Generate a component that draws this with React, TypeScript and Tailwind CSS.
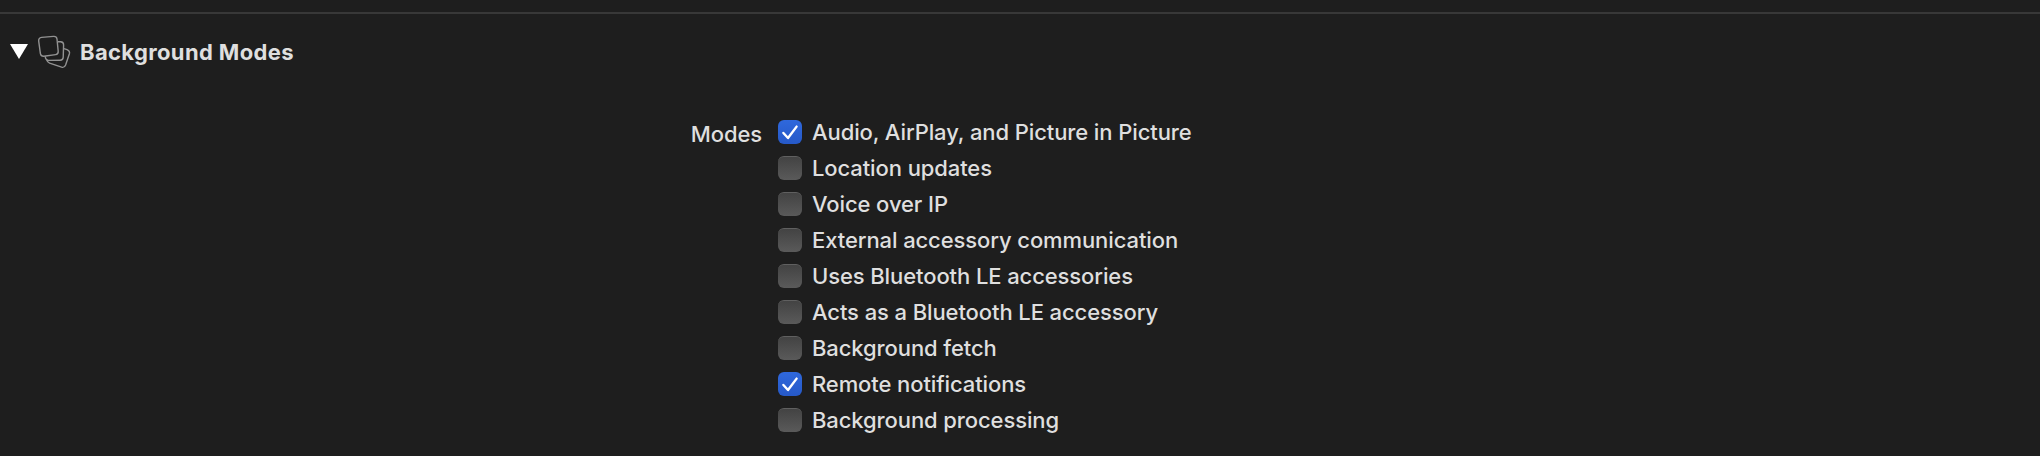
import { useState } from "react";

const MODES = [
  { label: "Audio, AirPlay, and Picture in Picture", enabled: true },
  { label: "Location updates", enabled: false },
  { label: "Voice over IP", enabled: false },
  { label: "External accessory communication", enabled: false },
  { label: "Uses Bluetooth LE accessories", enabled: false },
  { label: "Acts as a Bluetooth LE accessory", enabled: false },
  { label: "Background fetch", enabled: false },
  { label: "Remote notifications", enabled: true },
  { label: "Background processing", enabled: false },
];

function LayersIcon() {
  return (
    <svg
      className="h-9 w-9 shrink-0"
      viewBox="0 0 36 36"
      fill="none"
      stroke="#929292"
      strokeWidth="1.4"
      strokeLinejoin="round"
    >
      <path d="M5.6 3.4 17.6 2.4Q20.6 2.2 21 5L22.2 17.2Q22.4 20.2 19.6 20.6L7.8 22.2Q5 22.4 4.4 19.6L2.7 7.2Q2.4 3.8 5.6 3.4Z" />
      <path d="M22 7.8 24.6 7.8Q27.6 8 27.6 10.8L27.2 23.4Q27 26.2 24.2 26.2L12.4 26.4Q9.6 26.2 9.2 22.4" />
      <path d="M28 14.6 31 15.6Q34.2 17 33.4 19.8L29.6 31Q28.4 34 25.6 33.2L13.6 29.2Q11.4 28.2 10.8 26" />
    </svg>
  );
}

function Checkbox({ checked, onToggle }: { checked: boolean; onToggle: () => void }) {
  return (
    <button
      role="checkbox"
      aria-checked={checked}
      onClick={onToggle}
      className={`flex h-6 w-6 shrink-0 items-center justify-center rounded-[6px] ${
        checked
          ? "bg-linear-to-b from-[#2f68dc] to-[#2659c8]"
          : "border-t border-[#606060] bg-linear-to-b from-[#434343] to-[#5a5a5a]"
      }`}
    >
      {checked && (
        <svg className="h-6 w-6" viewBox="0 0 24 24" fill="none" stroke="#fff" strokeWidth="2.4" strokeLinecap="round" strokeLinejoin="round">
          <path d="M5.4 13 10 18 18.6 6.6" />
        </svg>
      )}
    </button>
  );
}

export default function App() {
  const [modes, setModes] = useState(MODES);
  const [open, setOpen] = useState(true);

  function toggle(index: number) {
    setModes(modes.map((m, i) => (i === index ? { ...m, enabled: !m.enabled } : m)));
  }

  return (
    <div className="h-[456px] w-full overflow-hidden bg-[#1e1e1e] pt-3 font-['Inter',sans-serif] text-[22px] text-[#dfdfdf]">
      <div className="h-0.5 bg-[#383838]" />
      <div className="flex h-[72px] items-center pt-1 pl-2.5">
        <button onClick={() => setOpen(!open)} aria-expanded={open} className="mr-2">
          <svg className="h-[18px] w-[18px]" viewBox="0 0 18 18" fill="#fff">
            <path d="M0 1h18L9 16Z" />
          </svg>
        </button>
        <LayersIcon />
        <h2 className="ml-2 font-bold tracking-[0.36px]">Background Modes</h2>
      </div>

      {open && (
        <div className="flex pt-7 font-medium tracking-[-0.1px]">
          <div className="mt-0.5 w-[762px] text-right leading-9">Modes</div>
          <div className="ml-4">
            {modes.map((mode, i) => (
              <div key={mode.label} className="flex h-9 items-center">
                <Checkbox checked={mode.enabled} onToggle={() => toggle(i)} />
                <span className="ml-2.5 whitespace-nowrap">{mode.label}</span>
              </div>
            ))}
          </div>
        </div>
      )}
    </div>
  );
}
